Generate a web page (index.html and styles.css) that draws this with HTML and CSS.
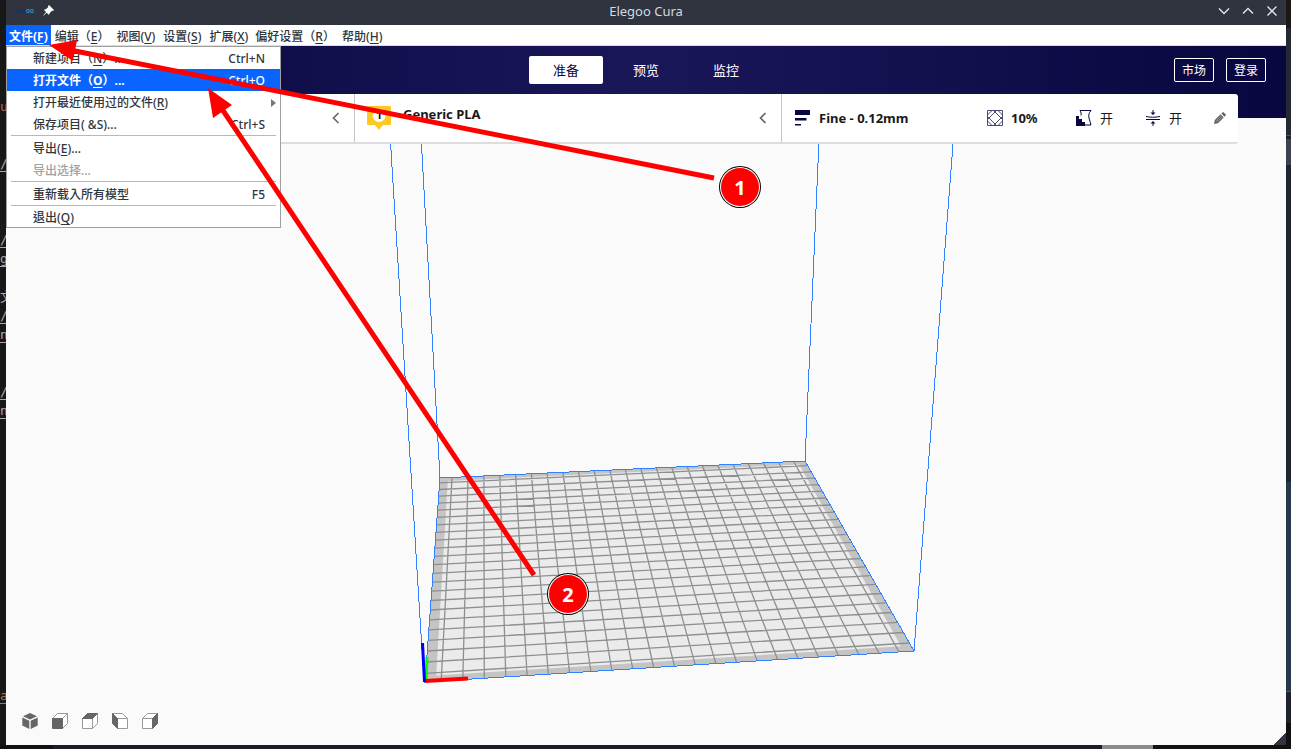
FILE: index.html
```html
<!DOCTYPE html>
<html lang="zh-CN">
<head>
<meta charset="utf-8">
<title>Elegoo Cura</title>
<link rel="stylesheet" href="styles.css">
</head>
<body>
<div class="desktop">
  <pre class="editor-strip" aria-hidden="true">





<span class="orange">u</span>


<u>/</u>



<u>/</u>
<u>g</u>

文
<u>/</u>
<u>n</u>


<u>/</u>
<u>n</u>














<u class="orange">a</u></pre>

  <main class="window">
    <div class="titlebar">
      <div class="title-left">
        <span class="brand">ELEG<span class="brand-end">OO</span></span>
        <svg class="pin" viewBox="0 0 12 12"><path d="M7 0l5 5-1 1-1-.3L7.500 8.200 7 10 4.700 7.700 0.500 11.500 4 7 1.800 4.700 3.800 4.300 6.300 2 6 1z" fill="#fff"/></svg>
      </div>
      <div class="title">Elegoo Cura</div>
      <div class="title-controls">
        <button aria-label="最小化"><svg viewBox="0 0 12 12"><path d="M1 3.500l5 5 5-5"/></svg></button>
        <button aria-label="最大化"><svg viewBox="0 0 12 12"><path d="M1 8.500l5-5 5 5"/></svg></button>
        <button aria-label="关闭"><svg viewBox="0 0 12 12"><path d="M1.500 1.500l9 9M10.500 1.500l-9 9"/></svg></button>
      </div>
    </div>

    <nav class="menubar" lang="zh-Hant">
      <button class="active">文件(<u>F</u>)</button>
      <button class="wide">编辑（<u>E</u>）</button>
      <button>视图(<u>V</u>)</button>
      <button>设置(<u>S</u>)</button>
      <button>扩展(<u>X</u>)</button>
      <button class="wide">偏好设置（<u>R</u>）</button>
      <button>帮助(<u>H</u>)</button>
      <div class="dropdown">
        <button><span>新建项目（<u>N</u>）...</span><kbd>Ctrl+N</kbd></button>
        <button class="active"><span>打开文件（<u>O</u>）...</span><kbd>Ctrl+O</kbd></button>
        <button class="submenu"><span>打开最近使用过的文件(<u>R</u>)</span><i class="arrow"></i></button>
        <button><span>保存项目( &amp;S)...</span><kbd>Ctrl+S</kbd></button>
        <hr>
        <button><span>导出(<u>E</u>)...</span></button>
        <button disabled><span>导出选择...</span></button>
        <hr>
        <button><span>重新载入所有模型</span><kbd>F5</kbd></button>
        <hr>
        <button><span>退出(<u>Q</u>)</span></button>
      </div>
    </nav>

    <header class="header">
      <div class="tabs">
        <button class="active">准备</button>
        <button>预览</button>
        <button>监控</button>
      </div>
      <div class="account">
        <button>市场</button>
        <button>登录</button>
      </div>
    </header>

    <section class="stage">
      <svg class="scene" viewBox="6 118 1280 627" preserveAspectRatio="none">
        <polygon points="440,478 805,461 914,651 425,682" fill="#c4c4c4"/>
        <polygon id="plate" fill="#ebebeb"/>
        <path id="grid" fill="none" stroke="#8e8f91" stroke-width="1.300"/>
        <g class="edges">
          <path d="M440 478L805 461 914 651 425 682z"/>
          <path d="M389 118L424 682M420 118L440 478M820 118L805 461M955 118L914 651"/>
        </g>
        <path d="M427 657L426 681" stroke="#0f0" stroke-width="3"/>
        <path d="M425 681L468 678.500" stroke="#f00" stroke-width="4"/>
        <path d="M422.500 643L424.500 682" stroke="#00f" stroke-width="3"/>
      </svg>

      <div class="panel">
        <button class="machine" aria-label="打印机">
          <svg class="chevron" viewBox="0 0 8 12"><path d="M6.500 1L1.500 6l5 5"/></svg>
        </button>
        <button class="material">
          <svg class="extruder" viewBox="0 0 24 24"><path d="M1 0h22a1 1 0 0 1 1 1v17a1 1 0 0 1-1 1h-7l-4 5-4-5H1a1 1 0 0 1-1-1V1a1 1 0 0 1 1-1z" fill="#ffc924"/><circle cx="12" cy="9.500" r="6.500" fill="#fff"/><text x="12" y="13" text-anchor="middle">1</text></svg>
          <span>Generic PLA</span>
          <svg class="chevron" viewBox="0 0 8 12"><path d="M6.500 1L1.500 6l5 5"/></svg>
        </button>
        <button class="settings">
          <span class="profile">
            <svg class="icon" viewBox="0 0 16 16"><path d="M0 0h15v5H0zM0 8h11.500v2.500H0zM0 14h6v1.500H0z" fill="#08073f"/></svg>
            <b>Fine - 0.12mm</b>
          </span>
          <span class="setting infill">
            <svg class="icon" viewBox="0 0 16 16" fill="none" stroke="#4b4a72" stroke-width="1"><path d="M.5.5h15v15H.5zM.5 5L5 .5M.5 9.500L9.500.5M6.500.5l9 9M11 .5L15.500 5M.5 6.500l9 9M.5 11L5 15.500M15.500 6.500l-9 9M15.500 11L11 15.500"/></svg>
            <b>10%</b>
          </span>
          <span class="setting">
            <svg class="icon" viewBox="0 0 16 16"><path d="M4 .5h11C12.500 3.500 12.500 5 13 8l2 7H9M4 .5c1 2 1.500 3 1 5" fill="none" stroke="#08073f"/><path d="M0 6h3v3h3v3h3v4H0z" fill="#08073f"/></svg>
            <span>开</span>
          </span>
          <span class="setting">
            <svg class="icon" viewBox="0 0 16 16" stroke="#08073f" fill="none"><path d="M1 6.500c5 1 8 1 14 0M1 9.500h14M8 0v4M8 12v4"/><path d="M5.500 2.500h5L8 5zM5.500 13.500h5L8 11z" fill="#08073f" stroke="none"/></svg>
            <span>开</span>
          </span>
          <svg class="pencil" viewBox="0 0 12 12"><path d="M0 12l.8-4L6.500 2.300l3.200 3.200L4 11.200zM7.300 1.500L8.500.4q.6-.6 1.300 0l1.800 1.800q.6.700 0 1.300l-1.100 1.200z" fill="#666"/><path d="M2 9l5-5M3 10l5-5" stroke="#aaa" stroke-width=".6"/></svg>
        </button>
      </div>

      <div class="views">
        <button aria-label="3D视图"><svg viewBox="0 0 16 16" fill="#666"><path d="M8 0l7 3.200L8 6.500 1 3.200zM.3 4.500l7 3.200V16l-7-3.500zM15.700 4.500l-7 3.200V16l7-3.500z"/></svg></button>
        <button aria-label="正视图"><svg viewBox="0 0 16 16" stroke="#999" fill="#fff"><path d="M.5 5.500l5-5h10l-5 5zM10.500 5.500l5-5v10l-5 5z"/><path d="M.5 5.500h10v10H.5z" fill="#666" stroke="#666"/></svg></button>
        <button aria-label="顶视图"><svg viewBox="0 0 16 16" stroke="#999" fill="#fff"><path d="M.5 5.500h10v10H.5zM10.500 5.500l5-5v10l-5 5z"/><path d="M.5 5.500l5-5h10l-5 5z" fill="#666" stroke="#666"/></svg></button>
        <button aria-label="左视图"><svg viewBox="0 0 16 16" stroke="#999" fill="#fff"><path d="M5.500 5.500h10v10h-10zM.5.5h10l5 5h-10z"/><path d="M.5.5l5 5v10l-5-5z" fill="#666" stroke="#666"/></svg></button>
        <button aria-label="右视图"><svg viewBox="0 0 16 16" stroke="#999" fill="#fff"><path d="M.5 5.500h10v10H.5zM.5 5.500l5-5h10l-5 5z"/><path d="M10.500 5.500l5-5v10l-5 5z" fill="#666" stroke="#666"/></svg></button>
      </div>
      <div class="resize-corner"></div>
    </section>
  </main>

  <div class="right-strip"></div>
  <div class="bottom-strip"></div>

  <svg class="annotations" viewBox="0 0 1291 749" preserveAspectRatio="none">
    <g stroke="#f00" stroke-width="5">
      <path d="M714 178L70 50"/>
      <path d="M534 575L220 106"/>
    </g>
    <path d="M49 45L77 40 73 61zM208 88L232 105 213 118z" fill="#f00"/>
    <g class="badge">
      <circle cx="740" cy="187" r="21" fill="#000"/><circle cx="740" cy="187" r="20" fill="#fff"/><circle cx="740" cy="187" r="19" fill="#f00"/>
      <text x="740" y="195">1</text>
      <circle cx="568" cy="594" r="21" fill="#000"/><circle cx="568" cy="594" r="20" fill="#fff"/><circle cx="568" cy="594" r="19" fill="#f00"/>
      <text x="568" y="602">2</text>
    </g>
  </svg>
</div>
<script src="plate.js"></script>
</body>
</html>
```
FILE: styles.css
```css
* { box-sizing: border-box; }

body {
  margin: 0;
  font: 13px/16px "Noto Sans", "Noto Sans CJK SC", sans-serif;
  color: #191919;
}

button {
  margin: 0;
  padding: 0;
  border: 0;
  background: none;
  font: inherit;
  color: inherit;
}

svg { display: block; }

.desktop {
  position: relative;
  display: grid;
  grid-template: 1fr 4px / 6px 1fr 5px;
  height: 100vh;
  overflow: hidden;
  background: #181818;
}

.editor-strip {
  min-width: 0;
  margin: 0;
  padding-top: 2px;
  overflow: hidden;
  font: 13px/19px "DejaVu Sans Mono", "Noto Sans CJK SC", monospace;
  text-indent: -2px;
  color: #a9a9a9;
}

.editor-strip u { text-underline-offset: 3px; }
.editor-strip .orange { color: #b0704c; }

.window {
  display: flex;
  flex-direction: column;
  min-width: 0;
  background: #fafafa;
}

.right-strip {
  background: linear-gradient(#1c1614 28px, #242932 28px 135px, #4a4f59 135px 136px, #20242c 136px 139px, #3a4150 139px 165px, #20262f 165px 482px, #26384a 482px 691px, #555 691px 692px, #1d222c 692px 723px, #111 723px);
}

.bottom-strip {
  grid-column: 1 / -1;
  background: linear-gradient(90deg, #111 53px, #1c1d2b 53px 1102px, #8c8c8c 1102px 1153px, #111 1153px);
}

/* Title bar */
.titlebar {
  display: grid;
  grid-template-columns: 1fr auto 1fr;
  align-items: center;
  height: 25px;
  padding: 0 8px 4px;
  background: #2f343f;
  color: #d3dae3;
}

.title-left { display: flex; align-items: center; gap: 8px; }
.brand { font: bold 5px/8px "Noto Sans", sans-serif; color: #17306f; }
.brand-end { color: #2f9fc9; }
.pin { width: 12px; height: 12px; }
.title-controls { display: flex; justify-content: flex-end; gap: 12px; }
.title-controls svg { width: 12px; height: 12px; fill: none; stroke: #e6e9ee; stroke-width: 1.3; }

/* Menus */
.menubar {
  position: relative;
  z-index: 3;
  display: flex;
  gap: 2px;
  height: 21px;
  border-bottom: 1px solid #ddd;
  background: #fff;
  font: 500 12px/20px "Noto Sans", "Noto Sans CJK TC", sans-serif;
  color: #31363b;
}

.menubar > button { padding: 2px 3px 0; white-space: nowrap; }
.menubar > .wide { padding: 2px 2px 0; }
.menubar u { text-underline-offset: 2px; }
.menubar .active { background: #0a64ff; color: #fff; font-weight: 700; }

.dropdown {
  position: absolute;
  top: 21px;
  left: 0;
  width: 275px;
  border: 1px solid #a0a0a0;
  background: #fff;
}

.dropdown button {
  display: flex;
  align-items: center;
  justify-content: space-between;
  width: 100%;
  height: 22px;
  padding: 1px 15px 0 26px;
  text-align: left;
}

.dropdown button:last-child { height: 20px; padding-top: 2px; }
.dropdown button:disabled { color: #a0a0a0; }
.dropdown .submenu { padding-right: 4px; }
.dropdown kbd { font: inherit; font-weight: 500; }

.dropdown hr {
  height: 1px;
  margin: 0 4px 1px;
  border: 0;
  background: #b8b8b8;
}

.arrow {
  border: 4px solid transparent;
  border-left: 5px solid #777;
  border-right: 0;
}

/* Stage header */
.header {
  display: grid;
  grid-template-columns: 1fr auto 1fr;
  align-items: center;
  height: 72px;
  padding: 0 20px 24px;
  background: linear-gradient(90deg, #08073f, #1a1759 50%, #08073f);
  color: #fff;
}

.tabs { grid-column: 2; display: flex; gap: 6px; }
.tabs button { width: 74px; height: 28px; border-radius: 2px; }
.tabs .active { background: #fff; color: #08073f; }
.account { display: flex; justify-content: flex-end; gap: 12px; }
.account button { width: 40px; height: 24px; padding-top: 2px; border: 1px solid #fff; border-radius: 2px; font-size: 12px; }

/* 3D stage */
.stage {
  position: relative;
  display: flex;
  flex: 1;
  flex-direction: column;
  justify-content: space-between;
  min-height: 0;
}

.scene { position: absolute; inset: 0; width: 100%; height: 100%; }
.edges { fill: none; stroke: #3282ff; stroke-width: 1; shape-rendering: crispEdges; }

.panel {
  position: relative;
  display: grid;
  grid-template-columns: 300fr 427fr 457fr;
  height: 50px;
  margin: -24px 48px 0;
  border-bottom: 2px solid #ddd;
  border-radius: 3px;
  background: #fff;
}

.panel > button { display: flex; align-items: center; text-align: left; }
.panel > button + button { border-left: 1px solid #c4c4c4; }
.machine { justify-content: flex-end; padding-right: 14px; }
.material { gap: 12px; padding: 0 14px 0 12px; font-weight: bold; }
.material span { flex: 1; padding-bottom: 8px; }
.extruder { width: 24px; height: 24px; }
.extruder text { font: bold 10px "Noto Sans", sans-serif; }
.chevron { width: 8px; height: 12px; fill: none; stroke: #666; stroke-width: 1.6; }
.settings { gap: 32px; padding: 0 12px 0 13px; }
.profile, .setting { display: flex; align-items: center; gap: 8px; }
.profile { flex: 1; }
.infill { width: 57px; }
.icon { flex: none; width: 16px; height: 16px; }
.pencil { width: 12px; height: 12px; }

.views { position: relative; display: flex; gap: 14px; padding: 0 16px 16px; }
.views svg { width: 16px; height: 16px; }

.resize-corner {
  position: absolute;
  right: 0;
  bottom: 0;
  width: 13px;
  height: 13px;
  background: linear-gradient(135deg, transparent 50%, #2f343f 50%);
}

/* Tutorial markers */
.annotations {
  position: absolute;
  inset: 0;
  z-index: 5;
  width: 100%;
  height: 100%;
  pointer-events: none;
}

.badge text { font: bold 20px "Noto Sans", sans-serif; fill: #fff; text-anchor: middle; }
```
FILE: plate.js
```js
// Projects the 235 x 235 mm build plate onto its on-screen quadrilateral.
const SIZE = 235;
const [a, b, c, d] = [[440, 478], [805, 461], [914, 651], [425, 682]];

const dx1 = b[0] - c[0], dx2 = d[0] - c[0], sx = a[0] - b[0] + c[0] - d[0];
const dy1 = b[1] - c[1], dy2 = d[1] - c[1], sy = a[1] - b[1] + c[1] - d[1];
const det = dx1 * dy2 - dx2 * dy1;
const g = (sx * dy2 - dx2 * sy) / det;
const h = (dx1 * sy - sx * dy1) / det;

function project(x, y) {
  const u = x / SIZE, v = y / SIZE, w = g * u + h * v + 1;
  const px = ((b[0] - a[0] + g * b[0]) * u + (d[0] - a[0] + h * d[0]) * v + a[0]) / w;
  const py = ((b[1] - a[1] + g * b[1]) * u + (d[1] - a[1] + h * d[1]) * v + a[1]) / w;
  return px.toFixed(1) + "," + py.toFixed(1);
}

const inset = 5, far = SIZE - inset;
document.getElementById("plate").setAttribute("points",
  [project(inset, inset), project(far, inset), project(far, far), project(inset, far)].join(" "));

let path = "";
for (let p = 7.5; p < SIZE; p += 10) {
  path += `M${project(p, 0)}L${project(p, SIZE)}M${project(0, p)}L${project(SIZE, p)}`;
}
document.getElementById("grid").setAttribute("d", path);
```
